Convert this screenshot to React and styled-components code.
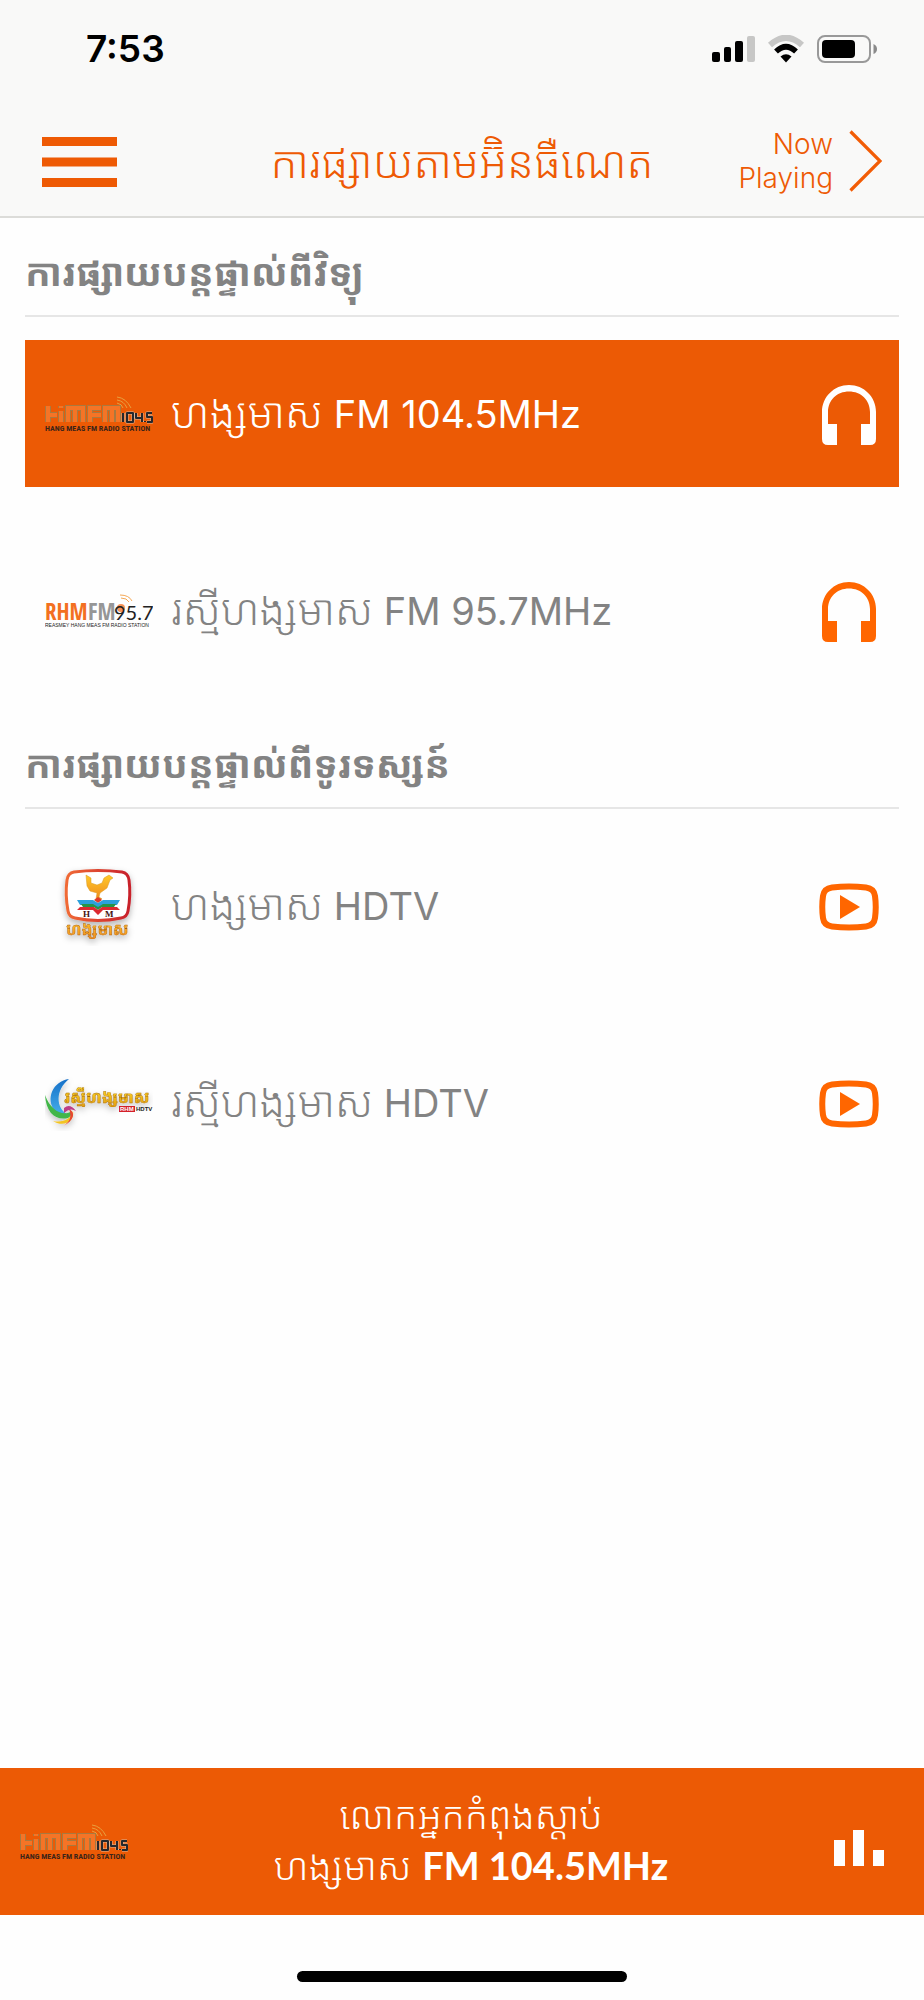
import React from 'react';
import styled, { createGlobalStyle } from 'styled-components';


const GlobalStyle = createGlobalStyle`
  * {
    box-sizing: border-box;
  }
  body {
    margin: 0;
    background: #fefefe;
    color: #838383;
    font-family: Inter, "Noto Sans Khmer", "Khmer OS", "Noto Sans", sans-serif;
  }
  button {
    padding: 0;
    border: none;
    background: none;
    color: inherit;
    font: inherit;
    cursor: pointer;
  }
  h1, h2, p, ul {
    margin: 0;
    padding: 0;
  }
  svg {
    display: block;
  }
`
const Screen = styled.div`
  min-height: 100vh;
  display: flex;
  flex-direction: column;
`
const Header = styled.header`
  background: #f9f9f8;
  border-bottom: 2px solid #dcdcd9;
`
const StatusBar = styled.div`
  height: 108px;
  padding: 28px 46px 0 86px;
  display: flex;
  align-items: flex-start;
  justify-content: space-between;
  color: #000;
  font-size: 37px;
  font-weight: 600;
  line-height: 42px;
`
const StatusIcons = styled.div`
  height: 42px;
  display: flex;
  align-items: center;
  gap: 12px;
`
const NavBar = styled.nav`
  height: 108px;
  padding: 0 42px;
  display: grid;
  grid-template-columns: 1fr auto 1fr;
  align-items: center;
  color: #ee5a04;
`
const Title = styled.h1`
  font-size: 44px;
  font-weight: 300;
  line-height: 60px;
  white-space: nowrap;
`
const MenuButton = styled.button`
  justify-self: start;
`
const NowPlaying = styled.button`
  padding-bottom: 3px;
  justify-self: end;
  display: flex;
  align-items: center;
  gap: 16px;
  font-size: 28px;
  font-weight: 300;
  line-height: 34px;
  text-align: right;

  span {
    display: block;
  }
`
const Content = styled.main`
  flex: 1;
  padding: 0 25px;
`
const Section = styled.section`
  margin-bottom: 26px;
`
const SectionTitle = styled.h2`
  height: 99px;
  padding-top: 10px;
  display: flex;
  align-items: center;
  border-bottom: 2px solid #e6e6e6;
  font-size: 38px;
  font-weight: 700;
  line-height: 60px;
  white-space: nowrap;
`
const ChannelList = styled.ul`
  padding-top: 23px;
  display: flex;
  flex-direction: column;
  gap: 50px;
  list-style: none;
`
const Channel = styled.button`
  width: 100%;
  height: 147px;
  padding: 0 20px;
  display: flex;
  align-items: center;
  gap: 18px;
  background: ${({ $active }) => ($active ? '#ec5a05' : 'transparent')};
  color: ${({ $active }) => ($active ? '#fff' : '#838383')};
  font-size: 38px;
  line-height: 60px;
  text-align: left;
`
const ChannelName = styled.span`
  flex: 1;
  white-space: nowrap;
`
const Khmer = styled.span`
  font-size: 42px;
  font-weight: 300;
`
const ChannelIcon = styled.span`
  width: 60px;
  padding-top: 2px;
  display: flex;
  justify-content: center;
  color: ${({ $active }) => ($active ? '#fff' : '#ff6600')};
`
const PlayerBar = styled.footer`
  height: 147px;
  padding: 0 20px;
  display: flex;
  align-items: center;
  background: #ec5a05;
  color: #fff;
`
const PlayerText = styled.div`
  flex: 1;
  padding-bottom: 2px;
  font-size: 38px;
  font-weight: 300;
  line-height: 50px;
  text-align: center;
  white-space: nowrap;

  strong {
    font-family: Lato, sans-serif;
    font-weight: 700;
  }
`
const LevelsButton = styled.button`
  width: 90px;
  display: flex;
  justify-content: center;
`
const HomeArea = styled.div`
  height: 85px;
  padding-bottom: 18px;
  display: flex;
  align-items: flex-end;
  justify-content: center;
`
const HomeIndicator = styled.div`
  width: 330px;
  height: 11px;
  border-radius: 6px;
  background: #000;
`


const SignalIcon = () => (
  <svg width="43" height="28" viewBox="0 0 43 28" aria-hidden="true">
    <rect x="0" y="17" width="8" height="10" rx="2" />
    <rect x="12" y="12" width="7" height="15" rx="2" />
    <rect x="23" y="6" width="8" height="21" rx="2" />
    <rect x="35" y="1" width="8" height="26" rx="2" fill="#c7c7c6" />
  </svg>
)

const WifiIcon = () => (
  <svg width="38" height="28" viewBox="0 0 38 28" aria-hidden="true">
    <path d="M3 10 Q19 -4.500 35 10" fill="none" stroke="#c7c7c6" strokeWidth="6" />
    <path d="M9 16.500 Q19 7 29 16.500" fill="none" stroke="#000" strokeWidth="5.500" />
    <path d="M13.500 21.500 Q19 17 24.500 21.500 L19 27.500 Z" />
  </svg>
)

const BatteryIcon = () => (
  <svg width="61" height="28" viewBox="0 0 61 28" aria-hidden="true">
    <rect x="1" y="1" width="52" height="26" rx="7" fill="none" stroke="#999" strokeWidth="2" />
    <rect x="5" y="5" width="33" height="18" rx="4" />
    <path d="M56.500 9 Q60 10.500 60 14 Q60 17.500 56.500 19 Z" fill="#8a8a8a" />
  </svg>
)

const MenuIcon = () => (
  <svg width="75" height="50" viewBox="0 0 75 50" fill="#ee5a04" aria-hidden="true">
    <rect width="75" height="9" />
    <rect y="20.500" width="75" height="9" />
    <rect y="41" width="75" height="9" />
  </svg>
)

const ChevronIcon = () => (
  <svg width="33" height="62" viewBox="0 0 33 62" fill="none" stroke="#f25c05" strokeWidth="3.200" aria-hidden="true">
    <path d="M1.500 1.500 L31 31 L1.500 60.500" />
  </svg>
)

const HeadphonesIcon = () => (
  <svg width="54" height="60" viewBox="0 0 54 60" fill="currentColor" aria-hidden="true">
    <path d="M27 0 C12 0 0 12 0 27 V54 Q0 60 6 60 H15 V39 H6 V27 C6 15 15 6.500 27 6.500 S48 15 48 27 V39 H39 V60 H48 Q54 60 54 54 V27 C54 12 42 0 27 0 Z" />
  </svg>
)

const PlayIcon = () => (
  <svg width="60" height="48" viewBox="0 0 60 48" aria-hidden="true">
    <path d="M13 4.500 Q30 2.500 47 4.500 Q55 5.500 56 13 Q57.500 24 56 35 Q55 42.500 47 43.500 Q30 45.500 13 43.500 Q5 42.500 4 35 Q2.500 24 4 13 Q5 5.500 13 4.500 Z" fill="none" stroke="currentColor" strokeWidth="6" />
    <path d="M21 12 L41 24 L21 36 Z" fill="currentColor" />
  </svg>
)

const LevelsIcon = () => (
  <svg width="50" height="48" viewBox="0 0 50 48" fill="#fff" aria-hidden="true">
    <rect x="0" y="22" width="11" height="26" />
    <rect x="19" y="12" width="11" height="36" />
    <rect x="39" y="32" width="11" height="16" />
  </svg>
)

const HmfmLogo = () => (
  <svg width="108" height="36" viewBox="0 0 108 36" role="img" aria-label="HMFM 104.5">
    <g fill="none" stroke="#e8a040" strokeWidth="1">
      <path d="M72 1 Q81 2 86 12" />
      <path d="M72 4 Q79 5 82 12" />
      <path d="M72 7 Q77 8 78 12" />
    </g>
    {[['#a9793f', 6], ['#f57426', 4]].map(([stroke, width]) => (
      <path
        key={stroke}
        d="M3 10 V26 M3 19 H12 M16 10 V12 M16 15 V26 M23 26 V12 H38 V26 M30 13 V26 M45 26 V12 H56 M45 19 H56 M60 26 V12 H73 V26 M67 13 V26"
        fill="none"
        stroke={stroke}
        strokeWidth={width}
      />
    ))}
    <g fill="none" strokeLinejoin="round">
      {[['#d9b8a0', 3], ['#26282c', 2]].map(([stroke, width]) => (
        <path
          key={stroke}
          d="M78 17 V26 M82 17 H88 V26 H82 Z M91 17 V22 H97 M97 17 V26 M100 25 V26 M107 17 H102 V21 H107 V26 H102"
          stroke={stroke}
          strokeWidth={width}
        />
      ))}
    </g>
    <text x="0" y="35" fill="#3c2418" fontFamily="Roboto Condensed, Roboto, sans-serif" fontSize="8" fontWeight="700">HANG MEAS FM RADIO STATION</text>
  </svg>
)

const RhmLogo = () => (
  <svg width="108" height="36" viewBox="0 0 108 36" role="img" aria-label="RHMFM 95.7">
    <g fill="none" stroke="#f5a855" strokeWidth="1">
      <path d="M75 2 Q84 2 87 8" />
      <path d="M76 5 Q82 5 84 9" />
    </g>
    <g fontFamily="Open Sans Condensed, Roboto Condensed, Roboto" fontSize="23" fontWeight="900">
      <text y="27" fill="#f37021">RHM</text>
      <text x="43" y="27" fill="#969696">FM</text>
    </g>
    <circle cx="76" cy="15" r="4" fill="#f79256" />
    <text x="69" y="27" fontFamily="Lato" fontSize="20" fill="#222">95.7</text>
    <text x="0" y="34" fontFamily="Liberation Sans" fontSize="5" fill="#222">REASMEY HANG MEAS FM RADIO STATION</text>
  </svg>
)

const HmTvLogo = () => (
  <svg width="108" height="80" viewBox="0 0 108 80" role="img" aria-label="Hang Meas HDTV">
    <defs>
      <linearGradient id="tvRing" x1="0" x2="1">
        <stop offset="0" stopColor="#f06a35" />
        <stop offset="1" stopColor="#c8202c" />
      </linearGradient>
      <linearGradient id="gold" x1="0" x2="0" y1="0" y2="1">
        <stop offset="0" stopColor="#ffc928" />
        <stop offset="1" stopColor="#f08c1e" />
      </linearGradient>
      <filter id="tvShadow" x="-20%" y="-20%" width="140%" height="150%">
        <feDropShadow dx="0" dy="3" stdDeviation="3" floodOpacity="0.3" />
      </filter>
    </defs>
    <g filter="url(#tvShadow)">
      <path d="M29 6 Q53 3 77 6 Q83 7 84 14 Q86 29 83 45 Q82 51 76 52 Q53 57 30 52 Q24 51 23 45 Q20 29 22 14 Q23 7 29 6 Z" fill="#fff" stroke="url(#tvRing)" strokeWidth="3" />
      <text x="21" y="69" fontFamily="Noto Sans Khmer, Khmer OS, sans-serif" fontSize="16" fontWeight="700" fill="url(#gold)" stroke="#a65d18" strokeWidth="0.400">ហង្សមាស</text>
    </g>
    <g transform="translate(0 2)">
      <path d="M41 7 L46 10 L46 15 L52 17 L57 15 L59 10 L64 7 L68 10 L65 12 L62 20 L55 25 L54 29 L57 31 L51 31 L52 25 L45 23 L42 18 Z" fill="url(#gold)" stroke="#d9991c" strokeWidth="0.500" />
      <path d="M49 32 L53 29 L57 32 L53 35 Z" fill="#e03a2a" />
      <path d="M32 32 H48 L53 35 L58 32 H75 L72 37 H57 L53 40 L49 37 H35 Z" fill="#2da0dc" />
      <path d="M36 36 H48 L53 39 L58 36 H71 L69 39 H57 L53 42 L49 39 H38 Z" fill="#279447" />
      <path d="M35 39 L32 42 H48 L53 47 L58 42 H75 L72 39 H57 L53 42 L49 39 Z" fill="#dc2a30" />
    </g>
    <g fontFamily="Liberation Serif" fontSize="9" fontWeight="700" fill="#45120e">
      <text x="38" y="51">H</text>
      <text x="60" y="51">M</text>
    </g>
  </svg>
)

const RhmTvLogo = () => (
  <svg width="108" height="56" viewBox="0 0 108 56" role="img" aria-label="Reasmey Hang Meas HDTV">
    <defs>
      <linearGradient id="swirlBlue" x1="0" x2="0" y1="0" y2="1">
        <stop offset="0" stopColor="#1670c8" />
        <stop offset="1" stopColor="#45aeea" />
      </linearGradient>
      <linearGradient id="yellow" x1="0" x2="0" y1="0" y2="1">
        <stop offset="0" stopColor="#ffdb22" />
        <stop offset="1" stopColor="#e09a12" />
      </linearGradient>
      <filter id="rhmShadow" x="-10%" y="-10%" width="120%" height="140%">
        <feDropShadow dx="0" dy="3" stdDeviation="3" floodOpacity="0.250" />
      </filter>
    </defs>
    <g filter="url(#rhmShadow)">
      <path d="M24 4 C8 6 0 24 10 36 Q15 41 22 39 C11 33 10 15 24 4 Z" fill="url(#swirlBlue)" />
      <path d="M0 20 C1 38 11 46 23 43 Q27 41 27 36 C18 42 6 36 0 20 Z" fill="#42b649" />
      <path d="M8 46 C19 53 30 46 28 36 C26 44 18 48 8 46 Z" fill="#f3c424" />
      <path d="M18 51 C29 46 31 37 24 34 C27 42 25 47 18 51 Z" fill="#e54732" />
      <path d="M19 33 Q25 28 31 36 Q25 32 19 38 Z" fill="#bd3d87" />
      <text x="19" y="28" fontFamily="Noto Sans Khmer, Khmer OS, sans-serif" fontSize="16" fontWeight="800" fill="url(#yellow)" stroke="#a66b10" strokeWidth="0.400">រស្មីហង្សមាស</text>
    </g>
    <rect x="74" y="31" width="16" height="6" fill="#d3202a" />
    <text x="75" y="36" fontFamily="Liberation Sans" fontSize="6" fontWeight="700" fill="#fff">RHM</text>
    <text x="91" y="36" fontFamily="Liberation Sans" fontSize="6" fontWeight="700" fill="#222">HDTV</text>
  </svg>
)

const radioChannels = [
  { name: 'ហង្សមាស', band: 'FM 104.5MHz', Logo: HmfmLogo, active: true },
  { name: 'រស្មីហង្សមាស', band: 'FM 95.7MHz', Logo: RhmLogo },
]

const tvChannels = [
  { name: 'ហង្សមាស', band: 'HDTV', Logo: HmTvLogo },
  { name: 'រស្មីហង្សមាស', band: 'HDTV', Logo: RhmTvLogo },
]

const ChannelSection = ({ title, channels, Icon }) => (
  <Section>
    <SectionTitle>{title}</SectionTitle>
    <ChannelList>
      {channels.map(({ name, band, Logo, active }) => (
        <li key={name}>
          <Channel type="button" $active={active}>
            <Logo />
            <ChannelName><Khmer>{name}</Khmer> {band}</ChannelName>
            <ChannelIcon $active={active}><Icon /></ChannelIcon>
          </Channel>
        </li>
      ))}
    </ChannelList>
  </Section>
)

const App = () => {
  return (
    <Screen lang="km">
      <GlobalStyle />

      <Header>
        <StatusBar>
          <span>7:53</span>
          <StatusIcons>
            <SignalIcon />
            <WifiIcon />
            <BatteryIcon />
          </StatusIcons>
        </StatusBar>
        <NavBar>
          <MenuButton type="button" aria-label="Menu"><MenuIcon /></MenuButton>
          {/* the joiner keeps the shifter above the vowel instead of below the letter */}
          <Title>ការផ្សាយតាមអ&#x200C;៊ិនធឺណេត</Title>
          <NowPlaying type="button">
            <span>
              <span>Now</span>
              <span>Playing</span>
            </span>
            <ChevronIcon />
          </NowPlaying>
        </NavBar>
      </Header>

      <Content>
        <ChannelSection title="ការផ្សាយបន្តផ្ទាល់ពីវិទ្យុ" channels={radioChannels} Icon={HeadphonesIcon} />
        <ChannelSection title="ការផ្សាយបន្តផ្ទាល់ពីទូរទស្សន៍" channels={tvChannels} Icon={PlayIcon} />
      </Content>

      <PlayerBar>
        <HmfmLogo />
        <PlayerText>
          <p>លោកអ្នកកំពុងស្តាប់</p>
          <p>ហង្សមាស <strong>FM 104.5MHz</strong></p>
        </PlayerText>
        <LevelsButton type="button" aria-label="Levels"><LevelsIcon /></LevelsButton>
      </PlayerBar>

      <HomeArea>
        <HomeIndicator />
      </HomeArea>
    </Screen>
  )
}

export default App;
